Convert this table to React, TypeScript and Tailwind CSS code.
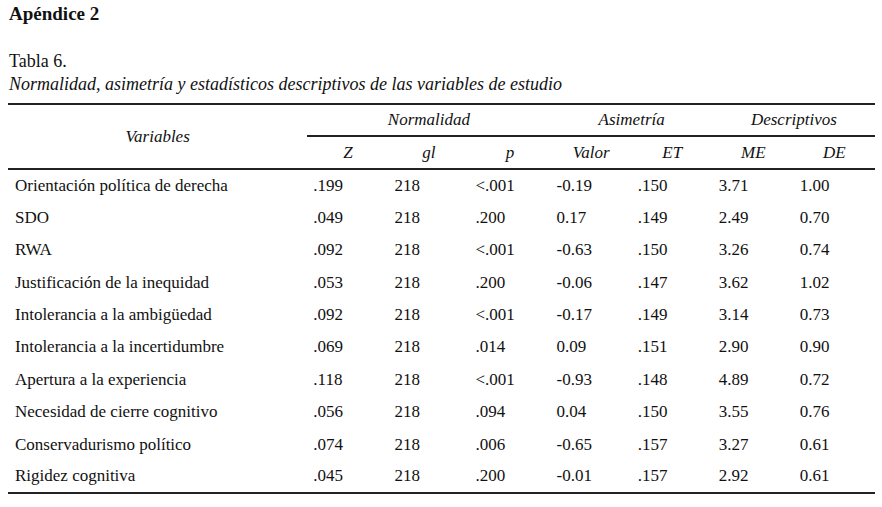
const ROWS: [string, string, string, string, string, string, string, string][] = [
  ['Orientación política de derecha', '.199', '218', '<.001', '-0.19', '.150', '3.71', '1.00'],
  ['SDO', '.049', '218', '.200', '0.17', '.149', '2.49', '0.70'],
  ['RWA', '.092', '218', '<.001', '-0.63', '.150', '3.26', '0.74'],
  ['Justificación de la inequidad', '.053', '218', '.200', '-0.06', '.147', '3.62', '1.02'],
  ['Intolerancia a la ambigüedad', '.092', '218', '<.001', '-0.17', '.149', '3.14', '0.73'],
  ['Intolerancia a la incertidumbre', '.069', '218', '.014', '0.09', '.151', '2.90', '0.90'],
  ['Apertura a la experiencia', '.118', '218', '<.001', '-0.93', '.148', '4.89', '0.72'],
  ['Necesidad de cierre cognitivo', '.056', '218', '.094', '0.04', '.150', '3.55', '0.76'],
  ['Conservadurismo político', '.074', '218', '.006', '-0.65', '.157', '3.27', '0.61'],
  ['Rigidez cognitiva', '.045', '218', '.200', '-0.01', '.157', '2.92', '0.61'],
];

const SUB = ['Z', 'gl', 'p', 'Valor', 'ET', 'ME', 'DE'];

export default function App() {
  return (
    <div className="w-[882px] h-[507px] bg-white pl-2 pt-[3px] font-['Liberation_Serif',serif] text-[#111]">
      <h1 className="text-[19px] font-bold leading-[22px] pl-px">Apéndice 2</h1>
      <p className="mt-[26px] text-[18px] leading-5 pl-px">Tabla 6.</p>
      <p className="mt-[3px] text-[18px] leading-5 italic pl-px">
        Normalidad, asimetría y estadísticos descriptivos de las variables de estudio
      </p>

      <table className="mt-[9px] w-[867px] table-fixed border-collapse border-y-2 border-[#222] text-[17px]">
        <colgroup>
          <col className="w-[299px]" />
          {SUB.map((s) => <col key={s} className="w-[81px]" />)}
        </colgroup>
        <thead className="italic">
          <tr className="h-[32px]">
            <th rowSpan={2} className="font-normal text-center align-middle">Variables</th>
            <th colSpan={3} className="font-normal text-center border-b-2 border-[#222]">Normalidad</th>
            <th colSpan={2} className="font-normal text-center border-b-2 border-[#222]">Asimetría</th>
            <th colSpan={2} className="font-normal text-center border-b-2 border-[#222]">Descriptivos</th>
          </tr>
          <tr className="h-[33px] border-b-2 border-[#222]">
            {SUB.map((s) => (
              <th key={s} className="font-normal text-center">{s}</th>
            ))}
          </tr>
        </thead>
        <tbody>
          {ROWS.map((r) => (
            <tr key={r[0]} className="h-[32.4px]">
              <td className="pl-[7px]">{r[0]}</td>
              {r.slice(1).map((v, i) => (
                <td key={i} className="pl-[6px]">{v}</td>
              ))}
            </tr>
          ))}
        </tbody>
      </table>
    </div>
  );
}
